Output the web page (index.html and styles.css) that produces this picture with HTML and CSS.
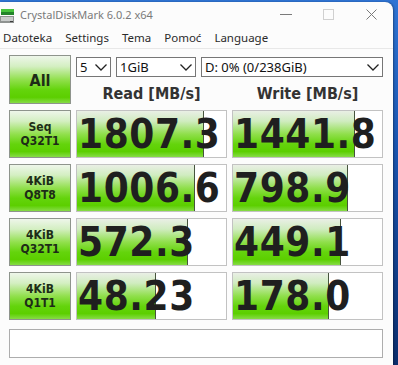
FILE: index.html
```html
<!DOCTYPE html>
<html>
<head>
<meta charset="utf-8">
<link rel="stylesheet" href="styles.css">
</head>
<body>
<div class="win">
  <div class="titlebar">
    <svg class="app-icon" width="15" height="16" viewBox="0 0 15 16">
      <rect x="1" y="2" width="13" height="3" fill="#46c33c"/>
      <rect x="1" y="5" width="13" height="3" fill="#23842a"/>
      <rect x="0" y="9" width="14" height="7" fill="#8e9290"/>
      <rect x="1" y="10" width="12" height="4" fill="#c9cccb"/>
      <rect x="10" y="14" width="3" height="1" fill="#3c3c3c"/>
    </svg>
    <span class="title">CrystalDiskMark 6.0.2 x64</span>
    <div class="controls">
      <div class="ctl"><svg width="12" height="10" viewBox="0 0 12 10"><line x1="0" y1="5.5" x2="12" y2="5.5" stroke="#7a7a7a" stroke-width="1"/></svg></div>
      <div class="ctl"><svg width="11" height="11" viewBox="0 0 11 11"><rect x="0.5" y="0.5" width="10" height="10" fill="none" stroke="#d0d0d0" stroke-width="1"/></svg></div>
      <div class="ctl"><svg width="11" height="11" viewBox="0 0 11 11"><path d="M0.5 0.5 L10.5 10.5 M10.5 0.5 L0.5 10.5" stroke="#7a7a7a" stroke-width="1" fill="none"/></svg></div>
    </div>
  </div>
  <div class="menubar">
    <span>Datoteka</span>
    <span>Settings</span>
    <span>Tema</span>
    <span>Pomoć</span>
    <span>Language</span>
  </div>
  <div class="main">
    <div class="grid">
      <div class="lbl all">All</div>
      <div class="topctl">
        <div class="selects">
          <div class="sel s1"><span>5</span><svg width="12" height="7" viewBox="0 0 12 7"><path d="M0.5 0.5 L6 6 L11.5 0.5" fill="none" stroke="#222" stroke-width="1.3"/></svg></div>
          <div class="sel s2"><span>1GiB</span><svg width="12" height="7" viewBox="0 0 12 7"><path d="M0.5 0.5 L6 6 L11.5 0.5" fill="none" stroke="#222" stroke-width="1.3"/></svg></div>
          <div class="sel s3"><span>D: 0% (0/238GiB)</span><svg width="12" height="7" viewBox="0 0 12 7"><path d="M0.5 0.5 L6 6 L11.5 0.5" fill="none" stroke="#222" stroke-width="1.3"/></svg></div>
        </div>
        <div class="heads">
          <div class="head">Read [MB/s]</div>
          <div class="head">Write [MB/s]</div>
        </div>
      </div>

      <div class="lbl"><span>Seq</span><span>Q32T1</span></div>
      <div class="cell" style="--w:85%"><span class="num">1807.3</span></div>
      <div class="cell" style="--w:82%"><span class="num">1441.8</span></div>

      <div class="lbl"><span>4KiB</span><span>Q8T8</span></div>
      <div class="cell" style="--w:79%"><span class="num">1006.6</span></div>
      <div class="cell" style="--w:77%"><span class="num">798.9</span></div>

      <div class="lbl"><span>4KiB</span><span>Q32T1</span></div>
      <div class="cell" style="--w:74%"><span class="num">572.3</span></div>
      <div class="cell" style="--w:72%"><span class="num">449.1</span></div>

      <div class="lbl"><span>4KiB</span><span>Q1T1</span></div>
      <div class="cell" style="--w:53%"><span class="num">48.23</span></div>
      <div class="cell" style="--w:64%"><span class="num">178.0</span></div>
    </div>
    <div class="status"></div>
  </div>
</div>
</body>
</html>
```

FILE: styles.css
```css
html, body {
  margin: 0;
  height: 100%;
}
body {
  background: linear-gradient(180deg, #2f74d4 0%, #1a55b0 40%, #0b2d6c 100%);
  overflow: hidden;
  font-family: "Noto Sans", "Open Sans", sans-serif;
}
.win {
  margin-top: 2px;
  width: 393px;
  height: 363px;
  background: #fcfcfc;
  border-top-right-radius: 8px;
  box-shadow: 1px 0 2px rgba(0, 0, 0, 0.35);
}
.titlebar {
  height: 24px;
  display: flex;
  align-items: center;
}
.app-icon {
  display: block;
  margin-top: 2px;
}
.title {
  margin-left: 5px;
  font-size: 11px;
  color: #7a7a7a;
}
.controls {
  margin-left: auto;
  display: flex;
}
.ctl {
  width: 43px;
  height: 24px;
  display: flex;
  align-items: center;
  justify-content: center;
}
.ctl svg {
  display: block;
}
.menubar {
  height: 22px;
  border-bottom: 1px solid #e8e8e8;
  display: flex;
  align-items: center;
  gap: 13px;
  padding-left: 3px;
  font-size: 11.5px;
  color: #2b2b2b;
}
.main {
  padding: 6px 0 0 9px;
}
.grid {
  display: grid;
  grid-template-columns: 62px 151px 151px;
  grid-template-rows: 49px repeat(4, 48px);
  column-gap: 5px;
  row-gap: 6px;
}
.lbl {
  box-sizing: border-box;
  border: 1px solid #8e948c;
  background: linear-gradient(to bottom, #eef6ea 0%, #d4efc2 22%, #92e04e 50%, #64d40c 72%, #5ccf00 88%, #86dc46 100%);
  display: flex;
  flex-direction: column;
  align-items: center;
  justify-content: center;
  text-align: center;
  font: bold 12px/14px "DejaVu Sans Condensed", "DejaVu Sans", sans-serif;
  color: #1d2c17;
}
.lbl span {
  display: block;
}
.lbl.all {
  font-size: 16px;
  line-height: 19px;
  padding-top: 1px;
}
.topctl {
  grid-column: 2 / 4;
  display: flex;
  flex-direction: column;
}
.selects {
  margin-top: 2px;
  display: flex;
  gap: 5px;
}
.sel {
  height: 20px;
  box-sizing: border-box;
  border: 1px solid #767676;
  background: #fff;
  display: flex;
  align-items: center;
  padding: 0 3px 0 3px;
  font-size: 13px;
  color: #111;
}
.sel svg {
  margin-left: auto;
  display: block;
}
.s1 { width: 35px; }
.s2 { width: 80px; }
.s3 { width: 182px; }
.heads {
  margin-top: 8px;
  display: grid;
  grid-template-columns: 151px 151px;
  column-gap: 5px;
}
.head {
  text-align: center;
  font: bold 16px/18px "DejaVu Sans Condensed", "DejaVu Sans", sans-serif;
  color: #333;
}
.cell {
  box-sizing: border-box;
  border: 1px solid #c2c2c2;
  background-color: #fff;
  background-image:
    linear-gradient(#46543d, #46543d),
    linear-gradient(to bottom, #e9efe5 0%, #d0ecc0 22%, #90df4c 50%, #64d40c 72%, #5ccf00 88%, #86dc46 100%);
  background-repeat: no-repeat;
  background-size: 1px 100%, var(--w) 100%;
  background-position: var(--w) 0, 0 0;
  overflow: hidden;
  display: flex;
  align-items: center;
}
.num {
  font: bold 40px/1 "DejaVu Sans Condensed", "DejaVu Sans", sans-serif;
  letter-spacing: 0.6px;
  color: #1f1f1f;
  white-space: nowrap;
  padding-left: 1px;
}
.status {
  margin-top: 9px;
  width: 374px;
  height: 29px;
  box-sizing: border-box;
  border: 1px solid #adadad;
  background: #fff;
}
```
